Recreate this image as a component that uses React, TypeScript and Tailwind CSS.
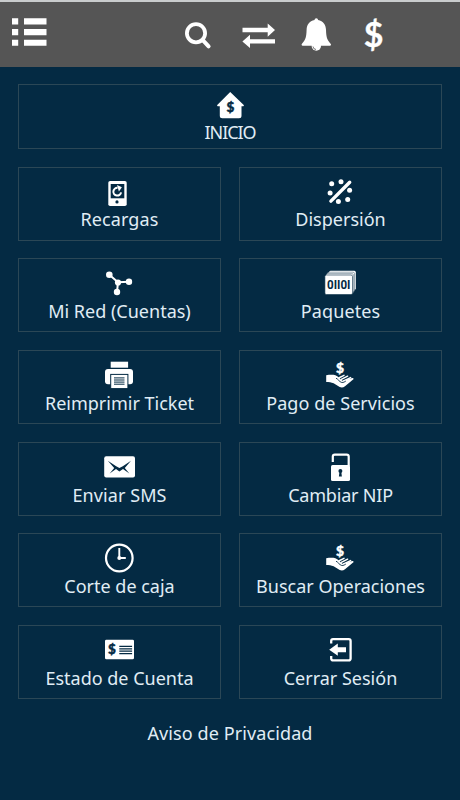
import type { ReactNode } from "react";
import clsx from "clsx";

interface MenuItem {
  label: string;
  icon: ReactNode;
  labelClass?: string;
}

const BG = "#042a43";

function Dollar({ x, y, size, fill }: { x: number; y: number; size: number; fill: string }) {
  return (
    <text
      x={x}
      y={y}
      fontSize={size}
      fill={fill}
      stroke={fill}
      strokeWidth=".4"
      textAnchor="middle"
      fontWeight={900}
      fontFamily="Lato, sans-serif"
    >
      $
    </text>
  );
}

function Icon({ children }: { children: ReactNode }) {
  return (
    <svg width="41" height="32" viewBox="0 0 41 32" fill="white" className="shrink-0 overflow-visible">
      {children}
    </svg>
  );
}

const homeIcon = (
  <Icon>
    <path d="M20.2 3 34 16.2l-.6 1h-1.9v9.6a2.5 2.5 0 0 1-2.5 2.5H12.3a2.5 2.5 0 0 1-2.5-2.5v-9.6H7.6l-.6-1z" />
    <Dollar x={20.3} y={23} size={13.5} fill={BG} />
  </Icon>
);

const phoneIcon = (
  <Icon>
    <rect x="9.3" y="5" width="18.4" height="25" rx="1.8" />
    <rect x="11.7" y="8" width="13.6" height="14.3" fill={BG} />
    <circle cx="18" cy="25.9" r="1.6" fill={BG} />
    <path d="M18.6 11.8a3.9 3.9 0 1 0 3.5 4.6" fill="none" stroke="white" strokeWidth="2" />
    <path d="M18 9l4.9 2.3-3 4.2z" />
  </Icon>
);

const scatterIcon = (
  <Icon>
    <path d="M10.9 25.1 29.7 6.2" stroke="white" strokeWidth="3.4" strokeLinecap="round" />
    <circle cx="11.7" cy="7.7" r="2.5" />
    <circle cx="21" cy="5.8" r="2.5" />
    <circle cx="29.6" cy="14.3" r="2.5" />
    <circle cx="27.7" cy="23.4" r="2.5" />
    <circle cx="18.4" cy="25.4" r="2.5" />
    <circle cx="10.1" cy="17" r="2.5" />
  </Icon>
);

const networkIcon = (
  <Icon>
    <path d="M10.3 7.7 19 15.3 30 14.7M19 15.3 18 25" fill="none" stroke="white" strokeWidth="2" />
    <circle cx="10.3" cy="7.7" r="3.3" />
    <circle cx="19" cy="15.5" r="3.1" />
    <circle cx="30" cy="14.7" r="3.2" />
    <circle cx="18" cy="25" r="3.2" />
  </Icon>
);

const packagesIcon = (
  <Icon>
    <rect x="9" y="3.7" width="26.8" height="19" rx="1.5" />
    <rect x="7.2" y="5.2" width="27.3" height="19.6" rx="1.5" stroke={BG} strokeWidth=".4" />
    <rect x="6" y="6.6" width="27.4" height="19.8" rx="1.5" stroke={BG} strokeWidth=".4" />
    <rect x="4.9" y="8" width="27.6" height="19.6" rx="1.5" stroke={BG} strokeWidth=".6" />
    <text
      x="7.1"
      y="21.9"
      fontSize="12.5"
      fontWeight="700"
      fontFamily="Roboto, sans-serif"
      fill={BG}
      textLength="23.4"
      lengthAdjust="spacingAndGlyphs"
    >
      0II0I
    </text>
  </Icon>
);

const printerIcon = (
  <Icon>
    <rect x="11.7" y="2.7" width="17.4" height="6" />
    <rect x="6" y="9.9" width="28" height="15.3" rx="3" />
    <rect x="11.7" y="15.4" width="17.2" height="14.2" stroke={BG} strokeWidth="1" />
    <path d="M15 18.9h10.5M15 21h10.5M15 23.1h10.5M15 25.2h10.5" stroke={BG} strokeWidth="1" />
  </Icon>
);

const handIcon = (
  <Icon>
    <Dollar x={19.9} y={14.2} size={13.8} fill="white" />
    <path d="M6.2 16.2c3.2-.4 6.4-.6 9.2 0 2.6.8 4.6 3.4 7 5.6l9.8-2.9c1.3-.2 1.9.9.9 1.7l-8.1 6.7c-1.7 1.4-3.5 1.6-5.3.8L13.6 24.2c-2.2-1-4.8-1.3-7.4-1.3z" />
    <path
      d="M19.2 18.7 24 16.4M21.3 20.4l6.3-3.2M23.6 22l7-3.4"
      fill="none"
      stroke="white"
      strokeWidth="1.5"
      strokeLinecap="round"
    />
    <path
      d="M16 19.2c2 .7 3.2 3.6 5.8 4.3 1.6.2 2.8-.7 4-1.4"
      fill="none"
      stroke={BG}
      strokeWidth=".9"
    />
  </Icon>
);

const mailIcon = (
  <Icon>
    <rect x="5.2" y="5.3" width="30.8" height="21.3" rx="2" />
    <path
      d="M8.8 9.7 17.2 15.3 20.4 17 23.8 15.3 32 9.7 25.8 17 30.3 22.6 24 18.1 20.4 20.6 17 18.1 10.7 22.6 15.2 17z"
      fill={BG}
    />
  </Icon>
);

const lockIcon = (
  <Icon>
    <rect x="11" y="14" width="19" height="16" rx="1.6" />
    <path
      d="M12.8 11V5.6a2 2 0 0 1 2-2h11.9a2 2 0 0 1 2 2V15"
      fill="none"
      stroke="white"
      strokeWidth="2.2"
    />
    <circle cx="20.4" cy="19.9" r="2" fill={BG} />
    <path d="M19.6 20h1.6l.7 5.6h-3z" fill={BG} />
  </Icon>
);

const clockIcon = (
  <Icon>
    <circle cx="20.3" cy="16" r="13.3" fill="none" stroke="white" strokeWidth="2.2" />
    <path d="M20.3 6V16M20.3 16h6.5" stroke="white" strokeWidth="1.9" />
    <circle cx="20.3" cy="16" r="2" />
  </Icon>
);

const statementIcon = (
  <Icon>
    <rect x="6" y="5.7" width="29" height="19.6" rx="1.4" />
    <Dollar x={13} y={20.3} size={13.5} fill={BG} />
    <path
      d="M20.3 12.4h12.8M20.3 14.8h12.8M20.3 17.2h12.8M20.3 19.6h12.8"
      stroke={BG}
      strokeWidth="1.3"
    />
  </Icon>
);

const logoutIcon = (
  <Icon>
    <path
      d="M11.2 9.6V7a1.8 1.8 0 0 1 1.8-1.8h15.8A1.8 1.8 0 0 1 30.6 7v17.6a1.8 1.8 0 0 1-1.8 1.8H13a1.8 1.8 0 0 1-1.8-1.8V22"
      fill="none"
      stroke="white"
      strokeWidth="2.3"
    />
    <path d="M9.2 15.7 17.8 9.6v3.6H26v5h-8.2v3.6z" />
  </Icon>
);

const items: MenuItem[] = [
  { label: "Recargas", icon: phoneIcon, labelClass: "tracking-[0.1px]" },
  { label: "Dispersión", icon: scatterIcon },
  { label: "Mi Red (Cuentas)", icon: networkIcon, labelClass: "mt-px" },
  { label: "Paquetes", icon: packagesIcon, labelClass: "mt-px tracking-[0.1px]" },
  { label: "Reimprimir Ticket", icon: printerIcon, labelClass: "mt-px" },
  { label: "Pago de Servicios", icon: handIcon, labelClass: "mt-px tracking-[0.05px]" },
  { label: "Enviar SMS", icon: mailIcon, labelClass: "mt-px tracking-[0.1px]" },
  { label: "Cambiar NIP", icon: lockIcon, labelClass: "mt-px tracking-[-0.2px]" },
  { label: "Corte de caja", icon: clockIcon, labelClass: "mt-px" },
  { label: "Buscar Operaciones", icon: handIcon, labelClass: "mt-px" },
  { label: "Estado de Cuenta", icon: statementIcon, labelClass: "mt-px" },
  { label: "Cerrar Sesión", icon: logoutIcon, labelClass: "mt-px" },
];

function Tile({ item, className }: { item: MenuItem; className: string }) {
  return (
    <button
      className={clsx(
        "flex flex-col items-center border border-[#2b4756] whitespace-nowrap",
        className
      )}
    >
      {item.icon}
      <span className={clsx("text-[18px] leading-[22px]", item.labelClass)}>{item.label}</span>
    </button>
  );
}

function Header() {
  return (
    <header className="flex h-[67px] items-start border-t-2 border-[#c9cccd] bg-[#555555] pt-[14px]">
      <button className="ml-[10px]" aria-label="Menú">
        <svg width="40" height="36" viewBox="10 16 40 36" fill="white">
          <path d="M12 18.3h6.2v6.3H12zM24 18.3h22.5v6.3H24zM12 29h6.2v6.2H12zM24 29h22.5v6.2H24zM12 39.7h6.2v6H12zM24 39.7h22.5v6H24z" />
        </svg>
      </button>
      <button className="ml-[130px]" aria-label="Buscar">
        <svg width="36" height="36" viewBox="180 16 36 36" fill="none" stroke="white">
          <circle cx="196" cy="33.2" r="9.1" strokeWidth="3.8" />
          <path d="M203 40.3l5.6 6" strokeWidth="4" strokeLinecap="round" />
        </svg>
      </button>
      <button className="ml-[24px]" aria-label="Transferir">
        <svg width="38" height="36" viewBox="240 16 38 36" fill="white">
          <path d="M242.5 27.8h25.2v-4.3l7.3 6.5-7.3 6.7v-4.4h-25.2zM275 39.3h-25v-4.5l-7.6 6.6 7.6 6.5v-4.3h25z" />
        </svg>
      </button>
      <button className="ml-[20px]" aria-label="Avisos">
        <svg width="36" height="36" viewBox="298 16 36 36" fill="white">
          <path d="M316.3 18.2c1.1 0 1.7.7 1.7 1.8 5.4 1 7.8 4.8 8 9.8.3 7 .6 9.6 4.8 14.3.5.8.1 1.6-.8 1.6h-27.4c-.9 0-1.3-.8-.8-1.6 4.2-4.7 4.5-7.3 4.8-14.3.2-5 2.6-8.8 8-9.8 0-1.1.6-1.8 1.7-1.8z" />
          <circle cx="316.3" cy="46" r="4.7" />
          <path d="M313 46.5a3.3 3.3 0 0 0 3 3" fill="none" stroke="#555555" strokeWidth=".8" />
        </svg>
      </button>
      <button className="-mt-[8px] ml-[24px]" aria-label="Saldo">
        <svg width="32" height="52" viewBox="358 8 32 52">
          <text
            x="373.6"
            y="46.5"
            fontSize="34"
            fontWeight="700"
            fontFamily="Lato, sans-serif"
            fill="white"
            stroke="white"
            strokeWidth=".3"
            textAnchor="middle"
          >
            $
          </text>
        </svg>
      </button>
    </header>
  );
}

export default function App() {
  return (
    <div className="min-h-[800px] w-full bg-[#042a43] font-['Noto_Sans',sans-serif] text-[#e0edf5]">
      <Header />
      <main className="flex flex-col px-[18px] pt-[17px]">
        <Tile
          item={{ label: "INICIO", icon: homeIcon, labelClass: "tracking-[-1.1px]" }}
          className="h-[65px] pt-[4px]"
        />
        <div className="mt-[17.7px] grid grid-cols-2 gap-x-[18px] gap-y-[17.67px]">
          {items.map((item) => (
            <Tile key={item.label} item={item} className="h-[74px] pt-[8px]" />
          ))}
        </div>
        <a className="mt-[23.3px] text-center text-[18px] leading-[22px] tracking-[0.1px]">
          Aviso de Privacidad
        </a>
      </main>
    </div>
  );
}
